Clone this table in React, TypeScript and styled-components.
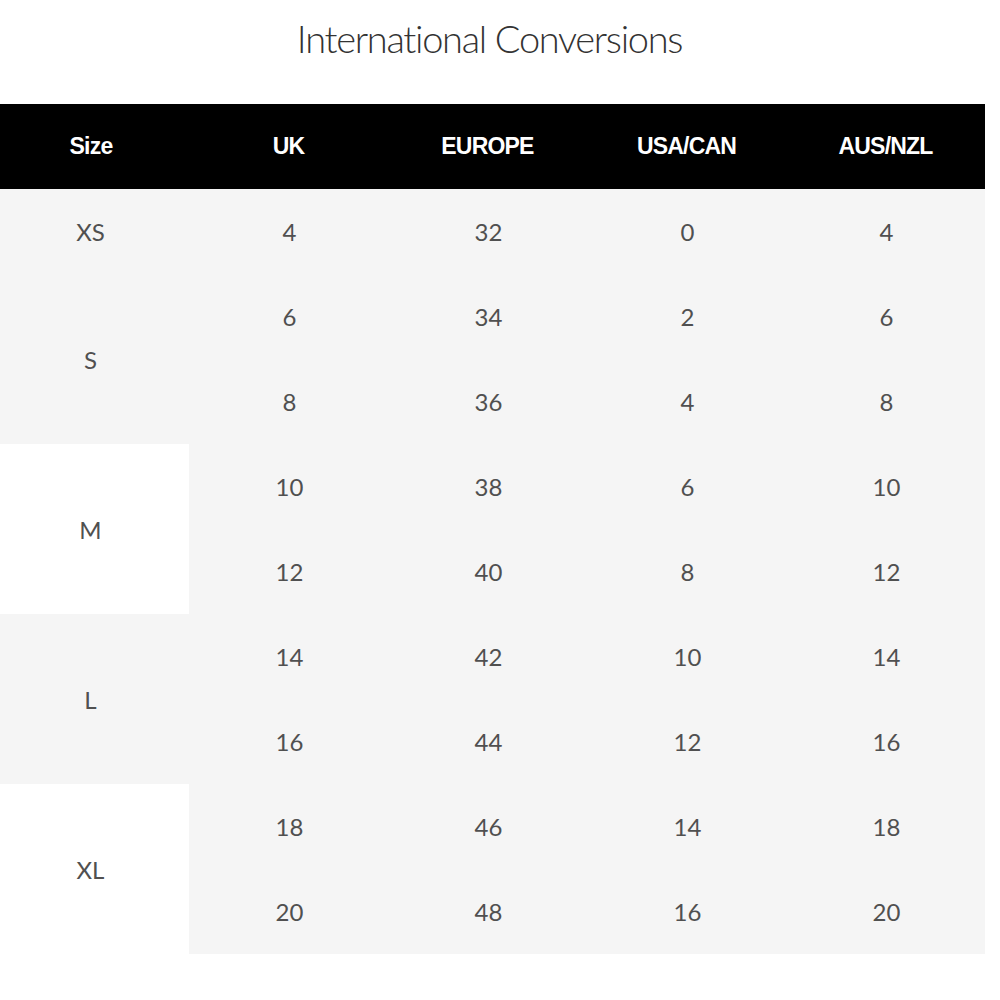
import * as React from 'react';
import styled, { createGlobalStyle } from 'styled-components';

const GlobalStyle = createGlobalStyle`
  html, body {
    margin: 0;
    padding: 0;
    background: #fff;
  }
  body {
    font-family: 'Lato', 'Liberation Sans', sans-serif;
  }
`;

type Row = { size: string; values: string[][]; light?: boolean };

const columns = ['Size', 'UK', 'EUROPE', 'USA/CAN', 'AUS/NZL'];

const rows: Row[] = [
  { size: 'XS', values: [['4', '32', '0', '4']] },
  {
    size: 'S',
    values: [
      ['6', '34', '2', '6'],
      ['8', '36', '4', '8'],
    ],
  },
  {
    size: 'M',
    light: true,
    values: [
      ['10', '38', '6', '10'],
      ['12', '40', '8', '12'],
    ],
  },
  {
    size: 'L',
    values: [
      ['14', '42', '10', '14'],
      ['16', '44', '12', '16'],
    ],
  },
  {
    size: 'XL',
    light: true,
    values: [
      ['18', '46', '14', '18'],
      ['20', '48', '16', '20'],
    ],
  },
];

const Page = styled.div`
  width: 985px;
  padding-top: 15px;
  padding-bottom: 47px;
`;

const Title = styled.h1`
  margin: 0 0 43px;
  text-align: center;
  font-family: 'Lato', sans-serif;
  font-weight: 300;
  font-size: 38px;
  line-height: 46px;
  color: #333;
  letter-spacing: -1.3px;
  padding-right: 6px;
`;

const Table = styled.div`
  width: 985px;
  display: grid;
  grid-template-columns: 189px repeat(4, 199px);
  grid-auto-rows: 85px;
  background: #f5f5f5;
`;

const HeadCell = styled.div<{ $first?: boolean }>`
  background: #000;
  color: #fff;
  display: flex;
  align-items: center;
  justify-content: center;
  padding-right: ${(p) => (p.$first ? '7px' : '0')};
  font-family: 'Liberation Sans', sans-serif;
  font-weight: 700;
  font-size: 23px;
  letter-spacing: -0.8px;
`;

const SizeCell = styled.div<{ $span: number; $light?: boolean }>`
  grid-row: span ${(p) => p.$span};
  background: ${(p) => (p.$light ? '#fff' : '#f5f5f5')};
  display: flex;
  align-items: center;
  justify-content: center;
  padding-right: 8px;
  font-size: 24px;
  color: #505050;
`;

const Cell = styled.div`
  display: flex;
  align-items: center;
  justify-content: center;
  padding-left: 2px;
  font-size: 24px;
  color: #505050;
`;

export default function App() {
  return (
    <Page>
      <GlobalStyle />
      <Title>International Conversions</Title>
      <Table>
        {columns.map((c, i) => (
          <HeadCell key={c} $first={i === 0}>
            {c}
          </HeadCell>
        ))}
        {rows.map((r) => (
          <React.Fragment key={r.size}>
            {r.values.map((vals, i) => (
              <React.Fragment key={i}>
                {i === 0 && (
                  <SizeCell $span={r.values.length} $light={r.light}>
                    {r.size}
                  </SizeCell>
                )}
                {vals.map((v, j) => (
                  <Cell key={j}>{v}</Cell>
                ))}
              </React.Fragment>
            ))}
          </React.Fragment>
        ))}
      </Table>
    </Page>
  );
}
